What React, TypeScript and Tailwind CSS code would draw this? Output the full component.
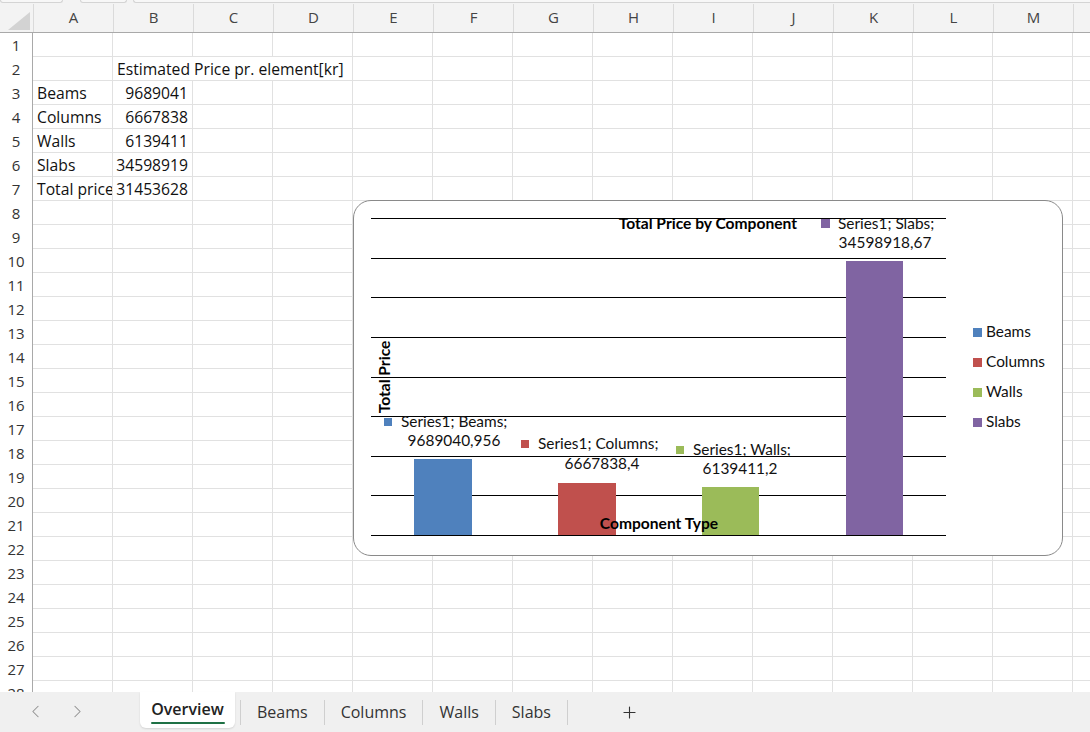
import React from "react";
import { ChevronLeft, ChevronRight, Plus } from "lucide-react";

const COLS = ["A", "B", "C", "D", "E", "F", "G", "H", "I", "J", "K", "L", "M", ""];
const ROWS = Array.from({ length: 28 }, (_, i) => i + 1);

const DATA: Record<number, { a?: string; b?: string }> = {
  3: { a: "Beams", b: "9689041" },
  4: { a: "Columns", b: "6667838" },
  5: { a: "Walls", b: "6139411" },
  6: { a: "Slabs", b: "34598919" },
  7: { a: "Total price", b: "31453628" },
};

const CELL = "shrink-0 border-r border-b border-[#e1e1e1] whitespace-nowrap text-[15.7px] leading-[24px] text-[#111]";

function HeaderRow() {
  return (
    <div className="relative flex h-[33px] bg-[#f3f3f3] border-b border-[#a9a9a9]">
      <div className="absolute left-0 top-0 flex w-full h-[3px]">
        <div className="w-[63px] h-[3px] border-b border-x border-[#d4d4d4] rounded-b-[3px] bg-[#f7f7f7]" />
        <div className="ml-[17px] w-[47px] h-[3px] border-b border-x border-[#d4d4d4] rounded-b-[3px] bg-[#f7f7f7]" />
        <div className="ml-[6px] flex-1 h-[3px] border-b border-l border-[#d4d4d4] rounded-bl-[3px] bg-[#f7f7f7]" />
      </div>
      <div className="w-[33px] shrink-0 relative">
        <svg width="33" height="32" className="absolute left-0 top-0">
          <polygon points="30,12 30,30 8,30" fill="#d3d3d3" />
        </svg>
      </div>
      {COLS.map((c, i) => (
        <div
          key={i}
          className="w-[80px] shrink-0 mt-[4px] flex items-end justify-center pb-[1px] text-[15px] leading-[28px] text-[#444] border-l border-[#dadada]"
        >
          {c}
        </div>
      ))}
    </div>
  );
}

function BodyRow({ n }: { n: number }) {
  const d = DATA[n] || {};
  return (
    <div className="flex h-[24px] shrink-0">
      <div className="w-[33px] shrink-0 border-r border-[#a9a9a9] bg-white text-center text-[15px] leading-[24px] text-[#333]">
        {n}
      </div>
      <div className={`${CELL} w-[80px] overflow-hidden pl-[4px]`}>{d.a}</div>
      {n === 2 ? (
        <div className={`${CELL} w-[240px] pl-[4px]`}>Estimated Price pr. element[kr]</div>
      ) : (
        <>
          <div className={`${CELL} w-[80px] overflow-hidden pr-[4px] text-right`}>{d.b}</div>
          <div className={`${CELL} w-[80px]`} />
          <div className={`${CELL} w-[80px]`} />
        </>
      )}
      {Array.from({ length: 10 }).map((_, i) => (
        <div key={i} className={`${CELL} w-[80px]`} />
      ))}
    </div>
  );
}

const GRID_Y = Array.from({ length: 9 }, (_, i) => Math.round(18 + i * 39.625) + 0.5);
const LBL = "font-['Lato'] text-[15.4px] fill-[#111]";
const BOLD = "font-['Lato'] text-[15.6px] font-bold fill-black";
const LEGEND: [string, string, number][] = [
  ["Beams", "#4f81bd", 132],
  ["Columns", "#c0504d", 162],
  ["Walls", "#9bbb59", 192],
  ["Slabs", "#8064a2", 222],
];

function Chart() {
  return (
    <div className="absolute left-[353px] top-[200px] w-[710px] h-[356px] rounded-[18px] border border-[#8a8a8a] bg-white overflow-hidden">
      <svg width="710" height="356" className="absolute left-[-1px] top-[-1px]">
        {GRID_Y.map((y, i) => (
          <line key={i} x1="18" x2="593" y1={y} y2={y} stroke="#000" strokeWidth="1.2" />
        ))}
        <rect x="61" y="259" width="58" height="76" fill="#4f81bd" />
        <rect x="205" y="283" width="58" height="52" fill="#c0504d" />
        <rect x="349" y="287" width="57" height="48" fill="#9bbb59" />
        <rect x="493" y="61" width="57" height="274" fill="#8064a2" />

        <text x="444" y="29" textAnchor="end" className={BOLD}>Total Price by Component</text>

        <rect x="468" y="19" width="9" height="9" fill="#8064a2" />
        <text x="485" y="29" className={LBL}>Series1; Slabs;</text>
        <text x="532" y="48" textAnchor="middle" className={LBL}>34598918,67</text>

        <rect x="31" y="218" width="8" height="8" fill="#4f81bd" />
        <text x="48" y="227" className={LBL}>Series1; Beams;</text>
        <text x="101" y="246" textAnchor="middle" className={LBL}>9689040,956</text>

        <rect x="168" y="240" width="8" height="8" fill="#c0504d" />
        <text x="185" y="249" className={LBL}>Series1; Columns;</text>
        <text x="249" y="269" textAnchor="middle" className={LBL}>6667838,4</text>

        <rect x="323" y="246" width="8" height="8" fill="#9bbb59" />
        <text x="340" y="255" className={LBL}>Series1; Walls;</text>
        <text x="387" y="274" textAnchor="middle" className={LBL}>6139411,2</text>

        <text transform="translate(37,177) rotate(-90)" textAnchor="middle" className={BOLD}>Total Price</text>
        <text x="306" y="329" textAnchor="middle" className={BOLD}>Component Type</text>

        {LEGEND.map(([name, color, y]) => (
          <g key={name}>
            <rect x="620" y={y - 4} width="9" height="9" fill={color} />
            <text x="633" y={y + 5} className={LBL}>{name}</text>
          </g>
        ))}
      </svg>
    </div>
  );
}

function TabBar() {
  const tabs = ["Beams", "Columns", "Walls", "Slabs"];
  return (
    <div className="flex h-[40px] bg-[#f0f0f0] items-start">
      <div className="flex items-center h-[38px] pl-[25px] gap-[21px] text-[#8f8f8f]">
        <ChevronLeft size={21} strokeWidth={1.2} />
        <ChevronRight size={21} strokeWidth={1.2} />
      </div>
      <div className="ml-[52px] w-[95px] h-[36px] bg-white rounded-b-[6px] shadow-[0_1px_2px_rgba(0,0,0,0.12)] flex flex-col items-center pt-[6px]">
        <span className="text-[16px] leading-[22px] font-semibold text-[#222]">Overview</span>
        <span className="mt-[2px] w-[74px] h-[2px] bg-[#1e7145] rounded-full" />
      </div>
      <div className="ml-[5px] flex items-center h-[40px]">
        {tabs.map((t) => (
          <div key={t} className="flex items-center h-[25px] border-l border-[#cfcfcf] px-[16px] text-[16px] text-[#333]">
            {t}
          </div>
        ))}
        <div className="h-[25px] border-l border-[#cfcfcf]" />
        <div className="ml-[52px] text-[#333]">
          <Plus size={19} strokeWidth={1.4} />
        </div>
      </div>
    </div>
  );
}

export default function App() {
  return (
    <div className="relative w-[1090px] h-[732px] overflow-hidden bg-white font-['Open_Sans']">
      <div className="h-[692px] overflow-hidden">
        <HeaderRow />
        {ROWS.map((n) => (
          <BodyRow key={n} n={n} />
        ))}
      </div>
      <TabBar />
      <Chart />
    </div>
  );
}
